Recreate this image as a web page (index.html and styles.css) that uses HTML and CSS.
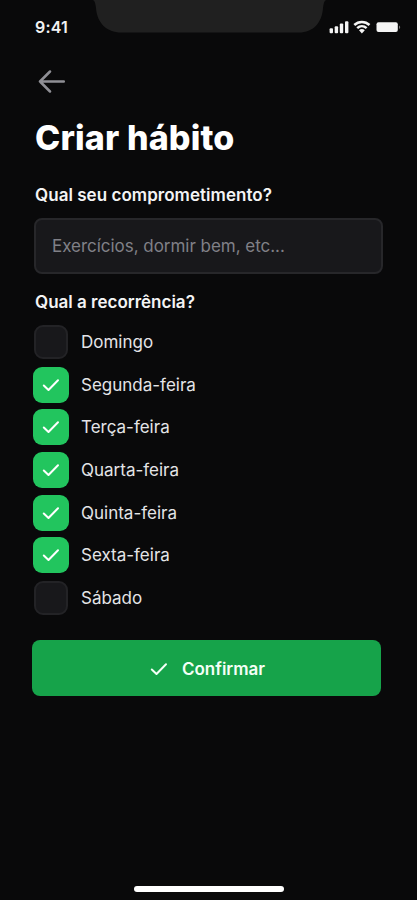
FILE: index.html
```html
<!DOCTYPE html>
<html lang="pt-BR">
<head>
	<meta charset="UTF-8">
	<meta name="viewport" content="width=device-width, initial-scale=1.0">
	<title>Criar hábito</title>
	<link rel="stylesheet" href="styles.css">
</head>
<body>
	<svg width="0" height="0" class="sprite">
		<symbol id="check" viewBox="0 0 18 14">
			<path d="M1.8 7.500 L6.500 12 L16 2.200" fill="none" stroke="currentColor" stroke-width="2" stroke-linecap="round" stroke-linejoin="round"/>
		</symbol>
	</svg>

	<div class="screen">
		<header class="status">
			<span class="time">9:41</span>
			<svg class="notch" viewBox="0 0 234 33">
				<path d="M0 0 C2 1 2.500 4 3 8 C4 23 14 32.500 28 32.500 H206 C220 32.500 229 23 230 8 C230.500 4 231 1 233 0 Z" fill="#202020"/>
			</svg>
			<svg class="signal" viewBox="0 0 72 14">
				<g fill="#f4f4f4">
					<rect x="0.600" y="8.300" width="3.400" height="5" rx="1"/>
					<rect x="5.700" y="6.300" width="3.400" height="7" rx="1"/>
					<rect x="10.800" y="3.600" width="3.400" height="9.700" rx="1"/>
					<rect x="16" y="1.300" width="3.400" height="12" rx="1"/>
					<rect x="47.500" y="2.200" width="21.300" height="9.800" rx="2"/>
				</g>
				<g fill="none" stroke="#f4f4f4" stroke-width="2.500">
					<path d="M25.300 5 C29.600 0.900 36.200 0.900 40.500 5"/>
					<path d="M28.200 8.200 C30.900 5.700 34.900 5.700 37.600 8.200"/>
				</g>
				<path d="M30 10.200 C31.800 8.600 34 8.600 35.800 10.200 L32.900 13.600 Z" fill="#f4f4f4"/>
				<path d="M70 5.500 C71.600 6.200 71.600 8.300 70 9 Z" fill="#777"/>
			</svg>
		</header>

		<main class="content">
			<a class="back" href="#" aria-label="Voltar">
				<svg viewBox="0 0 28 24">
					<path d="M25.800 12.500 H2 M12 2.500 L2 12.500 L12 22.500" fill="none" stroke="#8f8f95" stroke-width="2.500" stroke-linecap="round" stroke-linejoin="round"/>
				</svg>
			</a>

			<h1 class="title">Criar hábito</h1>

			<form class="form">
				<label class="label" for="habit">Qual seu comprometimento?</label>
				<input class="field" id="habit" type="text" placeholder="Exercícios, dormir bem, etc...">

				<p class="label label-days">Qual a recorrência?</p>
				<ul class="days">
					<li><span class="box"></span>Domingo</li>
					<li><span class="box checked"><svg><use href="#check"/></svg></span>Segunda-feira</li>
					<li><span class="box checked"><svg><use href="#check"/></svg></span>Terça-feira</li>
					<li><span class="box checked"><svg><use href="#check"/></svg></span>Quarta-feira</li>
					<li><span class="box checked"><svg><use href="#check"/></svg></span>Quinta-feira</li>
					<li><span class="box checked"><svg><use href="#check"/></svg></span>Sexta-feira</li>
					<li><span class="box"></span>Sábado</li>
				</ul>

				<button class="confirm" type="button"><svg><use href="#check"/></svg>Confirmar</button>
			</form>
		</main>

		<div class="home-bar"></div>
	</div>
</body>
</html>
```
FILE: styles.css
```css
*{
	box-sizing: border-box;
}
body{
	margin: 0;
	background-color: #09090a;
	color: #fff;
	font-family: Inter, "Liberation Sans", sans-serif;
}
.sprite{
	position: absolute;
}
.screen{
	display: flex;
	flex-direction: column;
	height: 900px;
	overflow: hidden;
}

/* status bar */
.status{
	display: flex;
	align-items: flex-start;
	height: 68px;
}
.time{
	width: 93px;
	padding: 17px 0 0 35px;
	font-size: 16px;
	line-height: 20px;
	font-weight: 600;
	letter-spacing: 0.2px;
	color: #f2f2f2;
}
.notch{
	width: 234px;
	height: 33px;
}
.signal{
	width: 72px;
	height: 14px;
	margin: 20px 0 0 2px;
}

.content{
	flex: 1;
	padding: 0 34px;
}
.back{
	display: block;
	width: 28px;
	height: 24px;
	margin: 1px 0 0 4px;
}
.back svg{
	display: block;
	width: 28px;
	height: 24px;
}
.title{
	margin: 24px 0 0 1px;
	font-size: 34px;
	line-height: 42px;
	font-weight: 800;
	letter-spacing: 0.15px;
}

/* form */
.form{
	display: flex;
	flex-direction: column;
}
.label{
	margin: 26px 0 0 1px;
	font-size: 17px;
	line-height: 20px;
	font-weight: 600;
	letter-spacing: 0.04px;
	color: #f4f4f5;
}
.label-days{
	margin-top: 18px;
	letter-spacing: 0;
}
.field{
	width: 349px;
	height: 56px;
	margin-top: 13px;
	padding: 0 16px;
	border: 2px solid #27272a;
	border-radius: 8px;
	background-color: #18181b;
	color: #fff;
	font-family: inherit;
	font-size: 17px;
	letter-spacing: -0.03px;
}
.field::placeholder{
	color: #808087;
	opacity: 1;
}
.days{
	display: flex;
	flex-direction: column;
	gap: 6.7px;
	margin: 12px 0 0 -1px;
	padding: 0;
	list-style: none;
}
.days li{
	display: flex;
	align-items: center;
	gap: 12px;
	height: 36px;
	font-size: 17px;
	color: #e4e4e7;
}
.box{
	display: flex;
	align-items: center;
	justify-content: center;
	width: 34px;
	height: 34px;
	margin: 0 1px;
	border: 2px solid #232326;
	border-radius: 9px;
	background-color: #18181b;
}
.checked{
	width: 36px;
	height: 36px;
	margin: 0;
	border: 0;
	background-color: #22c55e;
	color: #fff;
}
.box svg, .confirm svg{
	width: 18px;
	height: 14px;
}
.confirm{
	display: flex;
	align-items: center;
	justify-content: center;
	gap: 14px;
	width: 349px;
	height: 56px;
	margin: 24px 0 0 -2px;
	padding: 1px 0 0 2px;
	border: 0;
	border-radius: 8px;
	background-color: #16a34a;
	color: #f4fff7;
	font-family: inherit;
	font-size: 17px;
	font-weight: 600;
}

.home-bar{
	align-self: center;
	width: 150px;
	height: 6px;
	margin-bottom: 8px;
	border-radius: 3px;
	background-color: #fff;
}
```
